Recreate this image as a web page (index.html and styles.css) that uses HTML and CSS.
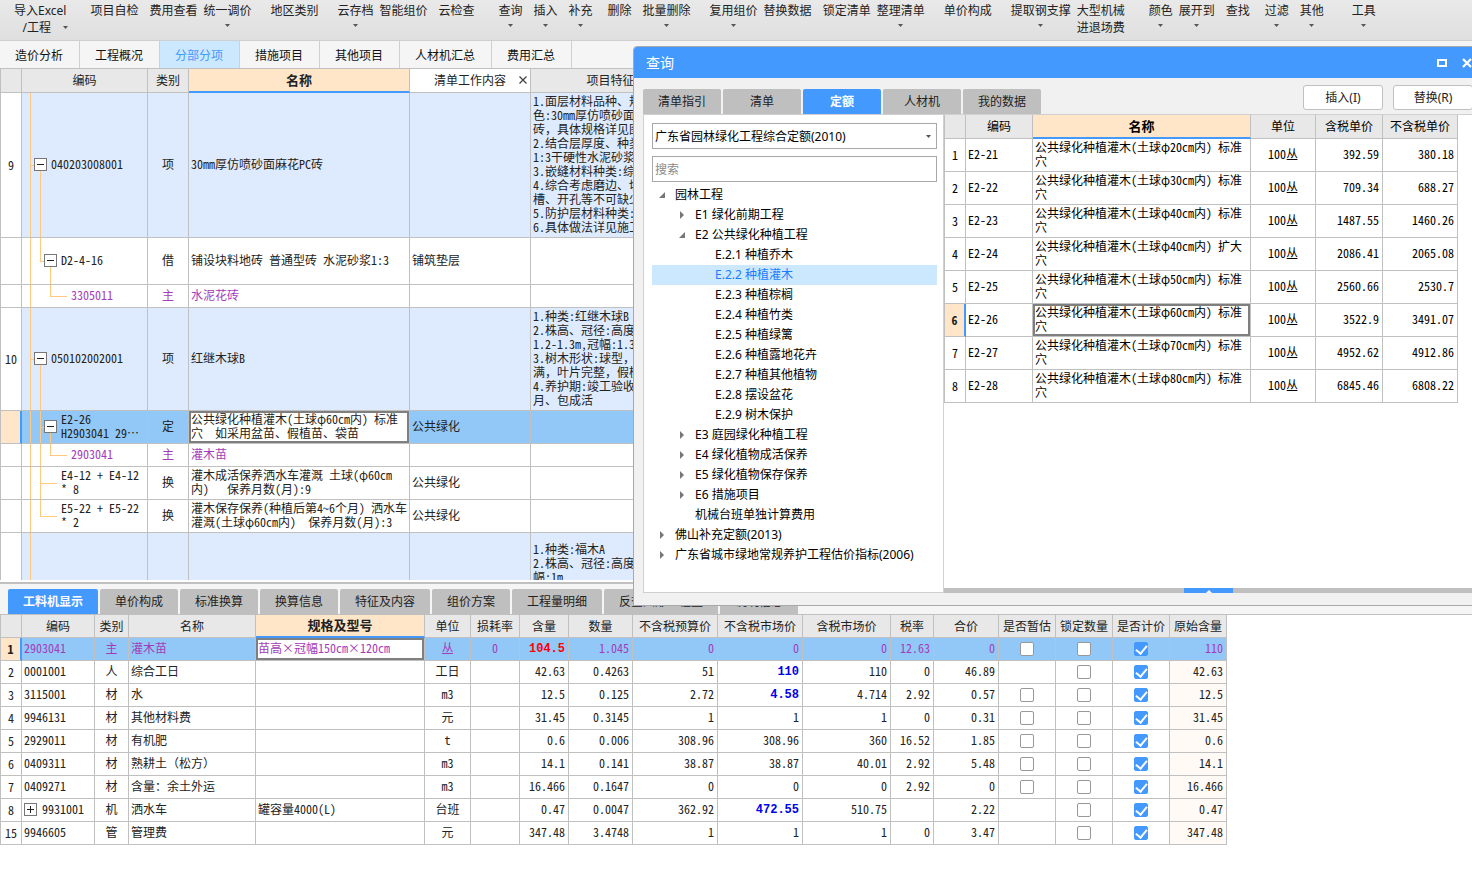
FILE: index.html
```html
<!DOCTYPE html>
<html lang="zh-CN">
<head>
<meta charset="utf-8">
<title>分部分项</title>
<link rel="stylesheet" href="styles.css">
</head>
<body>
<svg class="defs" aria-hidden="true">
  <symbol id="caret" viewBox="0 0 5 3"><path d="M0 0h5L2.500 3z" fill="currentColor"/></symbol>
  <symbol id="open" viewBox="0 0 6 6"><path d="M6 0v6H0z" fill="currentColor"/></symbol>
  <symbol id="closed" viewBox="0 0 4 8"><path d="M0 0l4 4-4 4z" fill="currentColor"/></symbol>
</svg>

<header class="toolbar">
  <button class="tool">导入Excel<span class="tool-sub">/工程<svg class="caret after"><use href="#caret"/></svg></span></button>
  <button class="tool g24">项目自检</button>
  <button class="tool g11">费用查看</button>
  <button class="tool g6">统一调价<svg class="caret"><use href="#caret"/></svg></button>
  <button class="tool g19">地区类别</button>
  <button class="tool g19">云存档<svg class="caret"><use href="#caret"/></svg></button>
  <button class="tool g6">智能组价</button>
  <button class="tool g11">云检查</button>
  <button class="tool g24">查询<svg class="caret"><use href="#caret"/></svg></button>
  <button class="tool g11">插入<svg class="caret"><use href="#caret"/></svg></button>
  <button class="tool g11">补充<svg class="caret"><use href="#caret"/></svg></button>
  <button class="tool g15">删除</button>
  <button class="tool g11">批量删除<svg class="caret"><use href="#caret"/></svg></button>
  <button class="tool g19">复用组价<svg class="caret"><use href="#caret"/></svg></button>
  <button class="tool g6">替换数据</button>
  <button class="tool g11">锁定清单</button>
  <button class="tool g6">整理清单<svg class="caret"><use href="#caret"/></svg></button>
  <button class="tool g19">单价构成</button>
  <button class="tool g19">提取钢支撑<svg class="caret"><use href="#caret"/></svg></button>
  <button class="tool g6">大型机械<span class="tool-sub">进退场费</span></button>
  <button class="tool g24">颜色<svg class="caret"><use href="#caret"/></svg></button>
  <button class="tool g6">展开到<svg class="caret"><use href="#caret"/></svg></button>
  <button class="tool g11">查找</button>
  <button class="tool g15">过滤<svg class="caret"><use href="#caret"/></svg></button>
  <button class="tool g11">其他<svg class="caret"><use href="#caret"/></svg></button>
  <button class="tool g28">工具<svg class="caret"><use href="#caret"/></svg></button>
</header>

<nav class="pages">
  <button>造价分析</button><button>工程概况</button><button class="on">分部分项</button><button>措施项目</button><button>其他项目</button><button>人材机汇总</button><button>费用汇总</button>
</nav>

<main class="upper">
  <table class="grid list">
    <colgroup><col class="w22"><col class="w126"><col class="w41"><col class="w221"><col class="w121"><col class="w160"></colgroup>
    <thead>
      <tr><th></th><th>编码</th><th>类别</th><th class="hot">名称</th><th class="plain"><span class="closable">清单工作内容<button aria-label="关闭"><svg viewBox="0 0 8 8"><path d="M0.500 0.500l7 7M7.500 0.500l-7 7" stroke="#444" stroke-width="1.300"/></svg></button></span></th><th>项目特征</th></tr>
    </thead>
    <tbody>
      <tr class="bill h145"><td class="no">9</td><td class="tree t-root"><div class="node n1"><button class="box" aria-label="折叠"></button>040203008001</div></td><td class="c">项</td><td>30mm厚仿喷砂面麻花PC砖</td><td></td><td>1.面层材料品种、规<br>色:30mm厚仿喷砂面<br>砖<span class="full">，</span>具体规格详见图<br>2.结合层厚度、种类<br>1:3干硬性水泥砂浆<br>3.嵌缝材料种类:综<br>4.综合考虑磨边、切<br>槽、开孔等不可缺少<br>5.防护层材料种类:<br>6.具体做法详见施工</td></tr>
      <tr class="h47"><td class="no"></td><td class="tree t-last-open"><div class="node n2"><button class="box" aria-label="折叠"></button>D2-4-16</div></td><td class="c">借</td><td>铺设块料地砖 普通型砖 水泥砂浆1:3</td><td>铺筑垫层</td><td></td></tr>
      <tr class="h23 main"><td class="no"></td><td class="tree t-leaf-end"><div class="node n3">3305011</div></td><td class="c">主</td><td>水泥花砖</td><td></td><td></td></tr>
      <tr class="bill h103"><td class="no">10</td><td class="tree t-root"><div class="node n1"><button class="box" aria-label="折叠"></button>050102002001</div></td><td class="c">项</td><td>红继木球B</td><td></td><td>1.种类:红继木球B<br>2.株高、冠径:高度<br>1.2-1.3m,冠幅:1.3<br>3.树木形状:球型<span class="full">，</span><br>满<span class="full">，</span>叶片完整<span class="full">，</span>假植<br>4.养护期:竣工验收<br>月、包成活</td></tr>
      <tr class="picked h33"><td class="no"></td><td class="tree t-mid-open"><div class="node n2"><button class="box" aria-label="折叠"></button><span>E2-26<br>H2903041 29⋯</span></div></td><td class="c">定</td><td class="edit">公共绿化种植灌木(土球φ60cm内) 标准<br>穴<span class="full">　</span>如采用盆苗、假植苗、袋苗</td><td>公共绿化</td><td></td></tr>
      <tr class="h23 main"><td class="no"></td><td class="tree t-leaf-mid"><div class="node n3">2903041</div></td><td class="c">主</td><td>灌木苗</td><td></td><td></td></tr>
      <tr class="h33"><td class="no"></td><td class="tree t-item"><div class="node n2t">E4-12 + E4-12<br>* 8</div></td><td class="c">换</td><td>灌木成活保养洒水车灌溉 土球(φ60cm<br>内)<span class="full">　</span>&nbsp;保养月数(月):9</td><td>公共绿化</td><td></td></tr>
      <tr class="h33"><td class="no"></td><td class="tree t-item-end"><div class="node n2t">E5-22 + E5-22<br>* 2</div></td><td class="c">换</td><td>灌木保存保养(种植后第4~6个月) 洒水车<br>灌溉(土球φ60cm内)<span class="full">　</span>保养月数(月):3</td><td>公共绿化</td><td></td></tr>
      <tr class="bill h63"><td class="no"></td><td class="tree t-rail"></td><td class="c"></td><td></td><td></td><td>1.种类:福木A<br>2.株高、冠径:高度<br>幅:1m</td></tr>
    </tbody>
  </table>
</main>

<section class="lower">
  <nav class="tabs">
    <button class="on">工料机显示</button><button>单价构成</button><button>标准换算</button><button>换算信息</button><button>特征及内容</button><button>组价方案</button><button>工程量明细</button><button>反查图形工程量</button><button>说明信息</button>
  </nav>
  <div class="sheet">
  <table class="grid res">
    <colgroup><col class="w22"><col class="w73"><col class="w34"><col class="w127"><col class="w169"><col class="w46"><col class="w49"><col class="w49"><col class="w64"><col class="w85"><col class="w85"><col class="w88"><col class="w43"><col class="w65"><col class="w57"><col class="w57"><col class="w57"><col class="w57"></colgroup>
    <thead>
      <tr><th></th><th>编码</th><th>类别</th><th>名称</th><th class="hot">规格及型号</th><th>单位</th><th>损耗率</th><th>含量</th><th>数量</th><th>不含税预算价</th><th>不含税市场价</th><th>含税市场价</th><th>税率</th><th>合价</th><th>是否暂估</th><th>锁定数量</th><th>是否计价</th><th>原始含量</th></tr>
    </thead>
    <tbody>
      <tr class="picked main"><td class="no">1</td><td>2903041</td><td class="c">主</td><td>灌木苗</td><td class="edit">苗高×冠幅150cm×120cm</td><td class="c">丛</td><td class="c">0</td><td class="r red">104.5</td><td class="r">1.045</td><td class="r">0</td><td class="r">0</td><td class="r">0</td><td class="r">12.63</td><td class="r">0</td><td class="c"><input type="checkbox" aria-label="是否暂估"></td><td class="c"><input type="checkbox" aria-label="锁定数量"></td><td class="c"><input type="checkbox" aria-label="是否计价" checked></td><td class="r">110</td></tr>
      <tr><td class="no">2</td><td>0001001</td><td class="c">人</td><td>综合工日</td><td></td><td class="c">工日</td><td></td><td class="r">42.63</td><td class="r">0.4263</td><td class="r">51</td><td class="r blue">110</td><td class="r">110</td><td class="r">0</td><td class="r">46.89</td><td></td><td class="c"><input type="checkbox" aria-label="锁定数量"></td><td class="c"><input type="checkbox" aria-label="是否计价" checked></td><td class="r orig">42.63</td></tr>
      <tr><td class="no">3</td><td>3115001</td><td class="c">材</td><td>水</td><td></td><td class="c">m3</td><td></td><td class="r">12.5</td><td class="r">0.125</td><td class="r">2.72</td><td class="r blue">4.58</td><td class="r">4.714</td><td class="r">2.92</td><td class="r">0.57</td><td class="c"><input type="checkbox" aria-label="是否暂估"></td><td class="c"><input type="checkbox" aria-label="锁定数量"></td><td class="c"><input type="checkbox" aria-label="是否计价" checked></td><td class="r orig">12.5</td></tr>
      <tr><td class="no">4</td><td>9946131</td><td class="c">材</td><td>其他材料费</td><td></td><td class="c">元</td><td></td><td class="r">31.45</td><td class="r">0.3145</td><td class="r">1</td><td class="r">1</td><td class="r">1</td><td class="r">0</td><td class="r">0.31</td><td class="c"><input type="checkbox" aria-label="是否暂估"></td><td class="c"><input type="checkbox" aria-label="锁定数量"></td><td class="c"><input type="checkbox" aria-label="是否计价" checked></td><td class="r orig">31.45</td></tr>
      <tr><td class="no">5</td><td>2929011</td><td class="c">材</td><td>有机肥</td><td></td><td class="c">t</td><td></td><td class="r">0.6</td><td class="r">0.006</td><td class="r">308.96</td><td class="r">308.96</td><td class="r">360</td><td class="r">16.52</td><td class="r">1.85</td><td class="c"><input type="checkbox" aria-label="是否暂估"></td><td class="c"><input type="checkbox" aria-label="锁定数量"></td><td class="c"><input type="checkbox" aria-label="是否计价" checked></td><td class="r orig">0.6</td></tr>
      <tr><td class="no">6</td><td>0409311</td><td class="c">材</td><td>熟耕土<span class="full">（</span>松方<span class="full">）</span></td><td></td><td class="c">m3</td><td></td><td class="r">14.1</td><td class="r">0.141</td><td class="r">38.87</td><td class="r">38.87</td><td class="r">40.01</td><td class="r">2.92</td><td class="r">5.48</td><td class="c"><input type="checkbox" aria-label="是否暂估"></td><td class="c"><input type="checkbox" aria-label="锁定数量"></td><td class="c"><input type="checkbox" aria-label="是否计价" checked></td><td class="r orig">14.1</td></tr>
      <tr><td class="no">7</td><td>0409271</td><td class="c">材</td><td>含量：余土外运</td><td></td><td class="c">m3</td><td></td><td class="r">16.466</td><td class="r">0.1647</td><td class="r">0</td><td class="r">0</td><td class="r">0</td><td class="r">2.92</td><td class="r">0</td><td class="c"><input type="checkbox" aria-label="是否暂估"></td><td class="c"><input type="checkbox" aria-label="锁定数量"></td><td class="c"><input type="checkbox" aria-label="是否计价" checked></td><td class="r orig">16.466</td></tr>
      <tr><td class="no">8</td><td><div class="node"><button class="box plus" aria-label="展开"></button>9931001</div></td><td class="c">机</td><td>洒水车</td><td>罐容量4000(L)</td><td class="c">台班</td><td></td><td class="r">0.47</td><td class="r">0.0047</td><td class="r">362.92</td><td class="r blue">472.55</td><td class="r">510.75</td><td></td><td class="r">2.22</td><td></td><td class="c"><input type="checkbox" aria-label="锁定数量"></td><td class="c"><input type="checkbox" aria-label="是否计价" checked></td><td class="r orig">0.47</td></tr>
      <tr><td class="no">15</td><td>9946605</td><td class="c">管</td><td>管理费</td><td></td><td class="c">元</td><td></td><td class="r">347.48</td><td class="r">3.4748</td><td class="r">1</td><td class="r">1</td><td class="r">1</td><td class="r">0</td><td class="r">3.47</td><td></td><td class="c"><input type="checkbox" aria-label="锁定数量"></td><td class="c"><input type="checkbox" aria-label="是否计价" checked></td><td class="r orig">347.48</td></tr>
    </tbody>
  </table>
  </div>
</section>

<section class="dialog" role="dialog" aria-labelledby="dialog-title">
  <div class="titlebar">
    <h2 id="dialog-title">查询</h2>
    <button class="max" aria-label="最大化"></button>
    <button class="close" aria-label="关闭窗口"><svg viewBox="0 0 10 10"><path d="M1 1l8 8M9 1l-8 8" stroke="#fff" stroke-width="2.200"/></svg></button>
  </div>
  <div class="dialog-body">
    <div class="dialog-head">
      <nav class="tabs wide">
        <button>清单指引</button><button>清单</button><button class="on">定额</button><button>人材机</button><button>我的数据</button>
      </nav>
      <div class="actions"><button>插入(I)</button><button>替换(R)</button></div>
    </div>
    <div class="split">
      <div class="side">
        <div class="combo">
          <select aria-label="定额库"><option>广东省园林绿化工程综合定额(2010)</option></select>
          <svg class="caret"><use href="#caret"/></svg>
        </div>
        <input class="search" type="text" placeholder="搜索" aria-label="搜索">
        <ul class="outline">
          <li class="l0"><i><svg class="open"><use href="#open"/></svg></i>园林工程</li>
          <li class="l1"><i><svg class="closed"><use href="#closed"/></svg></i>E1 绿化前期工程</li>
          <li class="l1"><i><svg class="open"><use href="#open"/></svg></i>E2 公共绿化种植工程</li>
          <li class="l2"><i></i>E.2.1 种植乔木</li>
          <li class="l2 on"><i></i>E.2.2 种植灌木</li>
          <li class="l2"><i></i>E.2.3 种植棕榈</li>
          <li class="l2"><i></i>E.2.4 种植竹类</li>
          <li class="l2"><i></i>E.2.5 种植绿篱</li>
          <li class="l2"><i></i>E.2.6 种植露地花卉</li>
          <li class="l2"><i></i>E.2.7 种植其他植物</li>
          <li class="l2"><i></i>E.2.8 摆设盆花</li>
          <li class="l2"><i></i>E.2.9 树木保护</li>
          <li class="l1"><i><svg class="closed"><use href="#closed"/></svg></i>E3 庭园绿化种植工程</li>
          <li class="l1"><i><svg class="closed"><use href="#closed"/></svg></i>E4 绿化植物成活保养</li>
          <li class="l1"><i><svg class="closed"><use href="#closed"/></svg></i>E5 绿化植物保存保养</li>
          <li class="l1"><i><svg class="closed"><use href="#closed"/></svg></i>E6 措施项目</li>
          <li class="l1"><i></i>机械台班单独计算费用</li>
          <li class="l0"><i><svg class="closed"><use href="#closed"/></svg></i>佛山补充定额(2013)</li>
          <li class="l0"><i><svg class="closed"><use href="#closed"/></svg></i>广东省城市绿地常规养护工程估价指标(2006)</li>
        </ul>
      </div>
      <div class="result">
        <table class="grid quota">
          <colgroup><col class="w22"><col class="w67"><col class="w218"><col class="w65"><col class="w67"><col class="w75"></colgroup>
          <thead><tr><th></th><th>编码</th><th class="hot">名称</th><th>单位</th><th>含税单价</th><th>不含税单价</th></tr></thead>
          <tbody>
            <tr class="h33"><td class="no">1</td><td>E2-21</td><td>公共绿化种植灌木(土球φ20cm内) 标准<br>穴</td><td class="c">100丛</td><td class="r">392.59</td><td class="r">380.18</td></tr>
            <tr class="h33"><td class="no">2</td><td>E2-22</td><td>公共绿化种植灌木(土球φ30cm内) 标准<br>穴</td><td class="c">100丛</td><td class="r">709.34</td><td class="r">688.27</td></tr>
            <tr class="h33"><td class="no">3</td><td>E2-23</td><td>公共绿化种植灌木(土球φ40cm内) 标准<br>穴</td><td class="c">100丛</td><td class="r">1487.55</td><td class="r">1460.26</td></tr>
            <tr class="h33"><td class="no">4</td><td>E2-24</td><td>公共绿化种植灌木(土球φ40cm内) 扩大<br>穴</td><td class="c">100丛</td><td class="r">2086.41</td><td class="r">2065.08</td></tr>
            <tr class="h33"><td class="no">5</td><td>E2-25</td><td>公共绿化种植灌木(土球φ50cm内) 标准<br>穴</td><td class="c">100丛</td><td class="r">2560.66</td><td class="r">2530.7</td></tr>
            <tr class="h33 current"><td class="no">6</td><td>E2-26</td><td class="edit">公共绿化种植灌木(土球φ60cm内) 标准<br>穴</td><td class="c">100丛</td><td class="r">3522.9</td><td class="r">3491.07</td></tr>
            <tr class="h33"><td class="no">7</td><td>E2-27</td><td>公共绿化种植灌木(土球φ70cm内) 标准<br>穴</td><td class="c">100丛</td><td class="r">4952.62</td><td class="r">4912.86</td></tr>
            <tr class="h33"><td class="no">8</td><td>E2-28</td><td>公共绿化种植灌木(土球φ80cm内) 标准<br>穴</td><td class="c">100丛</td><td class="r">6845.46</td><td class="r">6808.22</td></tr>
          </tbody>
        </table>
        <div class="drawer"><button aria-label="展开下方面板"><svg viewBox="0 0 6 3"><path d="M3 0l3 3H0z" fill="#fff"/></svg></button></div>
      </div>
    </div>
  </div>
</section>
</body>
</html>
```

FILE: styles.css
```css
:root {
  --ui: "Noto Sans", "Noto Sans CJK SC", sans-serif;
  --cell: "Noto Sans CJK SC", "Liberation Mono", monospace;
  --line: #c0c0c0;
  --accent: #4499ff;
  --hot: #ffe6c8;
  --rail: linear-gradient(#ffc880, #ffc880);
}

* { box-sizing: border-box; }

body {
  margin: 0;
  height: 100vh;
  display: flex;
  flex-direction: column;
  position: relative;
  overflow: hidden;
  background: #fff;
  color: #222;
  font: 12px/17px var(--ui);
}

button {
  padding: 0;
  border: 0;
  background: none;
  color: inherit;
  font: inherit;
  white-space: nowrap;
}

.defs { display: none; }

.caret {
  display: block;
  width: 5px;
  height: 3px;
  color: #555;
}

/* toolbar */
.toolbar {
  display: flex;
  align-items: flex-start;
  height: 41px;
  padding: 2px 0 0 14px;
  background: linear-gradient(#e9e9e9, #dfdfdf);
  border-bottom: 1px solid #cfcfcf;
}

.tool {
  display: flex;
  flex: none;
  flex-direction: column;
  align-items: center;
}

.tool > .caret { margin-top: 5px; }
.tool-sub { display: flex; align-items: center; gap: 12px; }
.tool .after { margin-right: -10px; }

.g6 { margin-left: 6px; }
.g11 { margin-left: 11px; }
.g15 { margin-left: 15px; }
.g19 { margin-left: 19px; }
.g24 { margin-left: 24px; }
.g28 { margin-left: 28px; }

/* page tabs */
.pages {
  display: flex;
  flex: none;
  height: 27px;
  background: #f5f5f5;
}

.pages button {
  padding: 2px 16px 0 15px;
  border-right: 1px solid #d0d0d0;
  color: #111;
}

.pages .on { background: #cce8ff; color: var(--accent); }

/* grids */
.grid {
  table-layout: fixed;
  border-collapse: separate;
  border-spacing: 0;
  border-top: 1px solid var(--line);
  font: 12px/14px var(--cell);
  font-feature-settings: "hwid" 1;
}

.grid .full { font-feature-settings: normal; }

.grid th, .grid td {
  padding: 0 2px 2px;
  border-right: 1px solid var(--line);
  border-bottom: 1px solid var(--line);
  text-align: left;
  vertical-align: middle;
  white-space: nowrap;
  overflow: hidden;
}

.grid th:first-child, .grid td:first-child { border-left: 1px solid var(--line); }

.grid th {
  height: 24px;
  padding: 0 0 1px;
  background: #e8e8e8;
  font-weight: 400;
  text-align: center;
}

.grid th.hot {
  background: var(--hot);
  border-bottom: 2px solid var(--accent);
  font-size: 13px;
  font-weight: 700;
}

.grid th.plain { background: #fff; }
.grid .c { text-align: center; }
.grid .r { text-align: right; padding-right: 3px; }
.grid .no { padding: 0; text-align: center; background: #fff; }

.w22 { width: 22px; }
.w34 { width: 34px; }
.w41 { width: 41px; }
.w43 { width: 43px; }
.w46 { width: 46px; }
.w49 { width: 49px; }
.w57 { width: 57px; }
.w64 { width: 64px; }
.w65 { width: 65px; }
.w67 { width: 67px; }
.w73 { width: 73px; }
.w75 { width: 75px; }
.w85 { width: 85px; }
.w88 { width: 88px; }
.w121 { width: 121px; }
.w126 { width: 126px; }
.w127 { width: 127px; }
.w160 { width: 160px; }
.w169 { width: 169px; }
.w218 { width: 218px; }
.w221 { width: 221px; }

.h23 { height: 23px; }
.h33 { height: 33px; }
.h47 { height: 47px; }
.h63 { height: 63px; }
.h103 { height: 103px; }
.h145 { height: 145px; }

.bill td { background-color: #deebff; }
.main td { color: #a43cba; }
.picked td { background-color: #92c8f7; }

.grid .picked .no, .grid .current .no {
  background: var(--hot);
  border-right: 2px solid var(--accent);
  color: #222;
  font-weight: 700;
}

.grid .edit {
  background: #fff;
  box-shadow: inset 0 0 0 2px #7f7f7f;
}

.grid .red, .grid .blue {
  padding-bottom: 0;
  font-family: "Liberation Mono", monospace;
  font-weight: 700;
}

.grid .red { color: #f00; }
.grid .blue { color: #00e; }
.grid .orig { background: #fffaf5; }

.closable {
  display: flex;
  align-items: center;
  justify-content: flex-end;
  gap: 13px;
  padding-right: 3px;
}

.closable svg { display: block; width: 8px; height: 8px; }

/* tree column */
.list .tree { padding: 0 0 2px; background-repeat: no-repeat; }
.node { display: flex; align-items: center; gap: 5px; }
.n1 { padding-left: 12px; gap: 4px; }
.n2 { padding-left: 22px; gap: 4px; }
.n2t { padding-left: 39px; }
.n3 { padding-left: 49px; }

.box {
  flex: none;
  width: 13px;
  height: 13px;
  border: 1px solid #777;
  background: linear-gradient(#222, #222) center / 7px 1px no-repeat #fff;
}

.box.plus {
  background:
    linear-gradient(#222, #222) center / 7px 1px no-repeat,
    linear-gradient(#222, #222) center / 1px 7px no-repeat #fff;
}

.t-rail { background-image: var(--rail); background-size: 1px 100%; background-position: 8px 0; }

.t-root {
  background-image: var(--rail), var(--rail), var(--rail);
  background-size: 1px 100%, 4px 1px, 1px 50%;
  background-position: 8px 0, 8px 50%, 18px 100%;
}

.t-last-open {
  background-image: var(--rail), var(--rail), var(--rail), var(--rail);
  background-size: 1px 100%, 1px 50%, 4px 1px, 1px 50%;
  background-position: 8px 0, 18px 0, 18px 50%, 28px 100%;
}

.t-mid-open {
  background-image: var(--rail), var(--rail), var(--rail), var(--rail);
  background-size: 1px 100%, 1px 100%, 4px 1px, 1px 50%;
  background-position: 8px 0, 18px 0, 18px 50%, 28px 100%;
}

.t-leaf-end {
  background-image: var(--rail), var(--rail), var(--rail);
  background-size: 1px 100%, 1px 50%, 17px 1px;
  background-position: 8px 0, 28px 0, 28px 50%;
}

.t-leaf-mid {
  background-image: var(--rail), var(--rail), var(--rail), var(--rail);
  background-size: 1px 100%, 1px 100%, 1px 50%, 17px 1px;
  background-position: 8px 0, 18px 0, 28px 0, 28px 50%;
}

.t-item {
  background-image: var(--rail), var(--rail), var(--rail);
  background-size: 1px 100%, 1px 100%, 17px 1px;
  background-position: 8px 0, 18px 0, 18px 50%;
}

.t-item-end {
  background-image: var(--rail), var(--rail), var(--rail);
  background-size: 1px 100%, 1px 50%, 17px 1px;
  background-position: 8px 0, 18px 0, 18px 50%;
}

/* panes */
.upper { flex: 1 1 0; min-height: 0; overflow: hidden; }
.upper .list { width: 691px; }

.lower {
  display: flex;
  flex: 0 0 294px;
  flex-direction: column;
  border-top: 2px solid #fff;
  background: #f5f5f5;
}

.lower .tabs { border-top: 2px solid var(--line); padding: 5px 8px 0; }
.sheet { flex: 1; background: #fff; border-top: 1px solid var(--line); }
.res { width: 1227px; border-top: 0; }
.res th { height: 23px; }
.res tbody tr { height: 23px; }

.tabs { display: flex; gap: 2px; }

.tabs button {
  height: 25px;
  padding: 0 15px;
  background: #bfbfbf;
  border-radius: 2px 2px 0 0;
}

.tabs .on { background: var(--accent); color: #fff; font-weight: 700; }
.tabs.wide button { min-width: 78px; }

input[type="checkbox"] {
  appearance: none;
  display: block;
  width: 14px;
  height: 14px;
  margin: 2px auto 0;
  border: 1px solid #999;
  border-radius: 2px;
  background: #fff;
}

input[type="checkbox"]:checked { border-color: var(--accent); background: var(--accent); }

input[type="checkbox"]:checked::before {
  content: "";
  display: block;
  width: 5px;
  height: 9px;
  margin: 0 auto;
  border: solid #fff;
  border-width: 0 2px 2px 0;
  transform: rotate(40deg);
}

/* query window */
.dialog {
  position: absolute;
  top: 46px;
  left: 633px;
  right: -10px;
  background: #f1f1f1;
  border: 1px solid #a8a8a8;
  border-radius: 4px 4px 0 0;
  overflow: hidden;
}

.titlebar {
  display: flex;
  align-items: center;
  height: 31px;
  padding: 0 9px 0 12px;
  background: var(--accent);
  color: #fff;
}

.titlebar h2 { flex: 1; margin: 0; font-size: 14px; font-weight: 400; }
.max { width: 10px; height: 8px; border: 2px solid #fff; margin-right: 15px; }
.close svg { display: block; width: 10px; height: 10px; }

.dialog-body { padding: 0 8px 12px 9px; }

.dialog-head {
  display: flex;
  justify-content: space-between;
  align-items: flex-end;
  height: 36px;
}

.actions { display: flex; gap: 10px; padding-bottom: 4px; }

.actions button {
  width: 80px;
  height: 25px;
  background: #fff;
  border: 1px solid #c0c0c0;
  border-radius: 3px;
}

.split { display: flex; border-top: 1px solid #d0d0d0; }

.side {
  flex: 0 0 301px;
  padding: 8px 6px 27px 8px;
  background: #fff;
  border: solid #d0d0d0;
  border-width: 0 1px 1px;
  color: #000;
}

.combo { display: grid; align-items: center; margin-bottom: 7px; }
.combo > * { grid-area: 1 / 1; }
.combo .caret { justify-self: end; margin-right: 6px; pointer-events: none; }

.combo select, .search {
  appearance: none;
  display: block;
  width: 100%;
  height: 26px;
  padding: 0 2px;
  border: 1px solid #a8a8a8;
  border-radius: 0;
  background: #fff;
  color: #000;
  font: inherit;
}

.search::placeholder { color: #8a8a8a; }

.outline { margin: 3px 0 0; padding: 0; list-style: none; line-height: 20px; }
.outline li { display: flex; gap: 6px; height: 20px; white-space: nowrap; }
.outline i { display: grid; place-items: center; width: 14px; color: #777; }
.outline .on { background: #cce8ff; color: #1a7cff; }
.l0 { padding-left: 3px; }
.l1 { padding-left: 23px; }
.l2 { padding-left: 43px; }
.open { width: 6px; height: 6px; }
.closed { width: 4px; height: 8px; }

.result {
  display: flex;
  flex: 1;
  flex-direction: column;
  align-items: flex-start;
  min-width: 0;
  background: #fff;
  color: #000;
}

.quota { width: 514px; border-top: 0; }

.drawer {
  display: flex;
  justify-content: center;
  width: 100%;
  height: 5px;
  margin-top: auto;
  background: #bfbfbf;
}

.drawer button { width: 49px; background: var(--accent); }
.drawer svg { display: block; width: 6px; height: 3px; margin: 1px auto 0; }
```
